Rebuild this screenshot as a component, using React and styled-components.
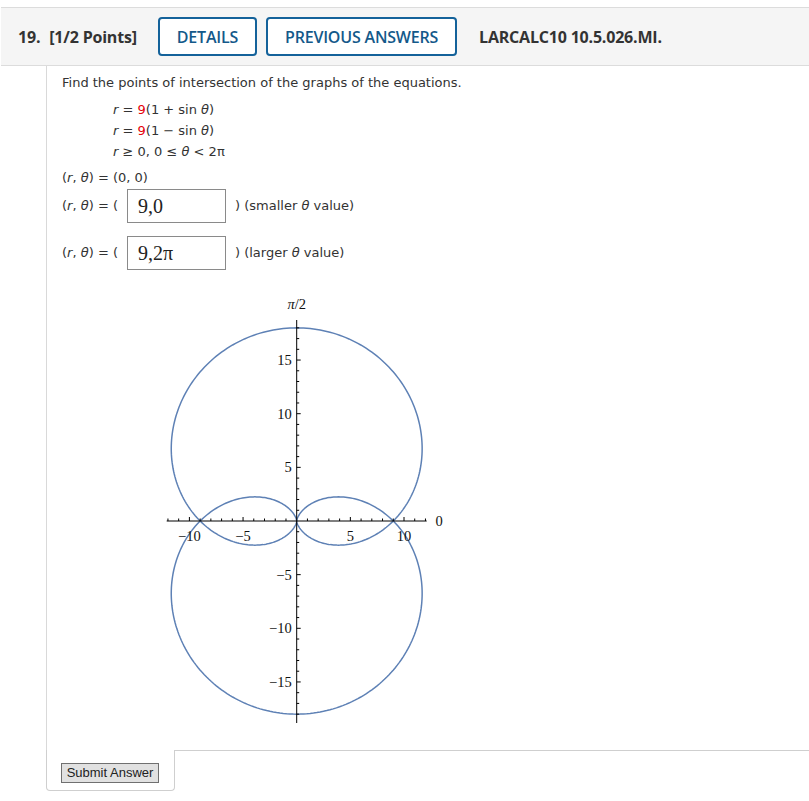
import React from "react";
import styled, { createGlobalStyle } from "styled-components";

const GlobalStyle = createGlobalStyle`
	body {
		margin: 0;
		background: #fff;
		font-family: "DejaVu Sans", Verdana, sans-serif;
		color: #333;
	}
`;

const Page = styled.div`
	padding-top: 7px;
	width: 809px;
`;

const Header = styled.div`
	display: flex;
	align-items: center;
	height: 57px;
	margin-left: 1px;
	background: #f5f5f5;
	border-top: 1px solid #dcdcdc;
	border-bottom: 1px solid #dcdcdc;
	font-family: "Open Sans", sans-serif;
	font-size: 16px;
	font-weight: 700;
	color: #333;
	letter-spacing: -0.2px;
`;

const Num = styled.span`
	margin-left: 17px;
	margin-right: 9px;
`;

const Points = styled.span`
	margin-right: 21px;
`;

const HeadButton = styled.button`
	height: 39px;
	margin-right: 9px;
	padding: 0 17px;
	background: #fff;
	border: 2px solid #14629a;
	border-radius: 4px;
	font-family: "Open Sans", sans-serif;
	font-size: 16px;
	font-weight: 600;
	letter-spacing: -0.2px;
	color: #14598a;
`;

const Code = styled.span`
	margin-left: 13px;
`;

const Body = styled.div`
	margin-left: 46px;
	border-left: 1px solid #d9d9d9;
	padding: 9px 0 20px 15px;
	font-size: 13px;
	line-height: 16px;
`;

const Line = styled.div`
	margin-top: ${(p) => p.$top || 0}px;
	padding-left: ${(p) => p.$indent || 0}px;
	display: flex;
	align-items: center;
	white-space: pre;
`;

const Red = styled.span`
	color: #e5000a;
`;

const I = styled.i`
	font-style: italic;
`;

const AnswerBox = styled.div`
	width: 87px;
	height: 32px;
	margin: 0 9px 0 9px;
	padding-left: 10px;
	border: 1px solid #8a8a8a;
	display: flex;
	align-items: center;
	font-family: "Liberation Serif", "Times New Roman", serif;
	font-size: 20px;
	color: #222;
`;

const Graph = styled.svg`
	display: block;
	margin: 20px 0 0 88px;
`;

const Footer = styled.div`
	display: flex;
	margin-left: 46px;
`;

const SubmitBox = styled.div`
	width: 98px;
	padding: 12px 15px 7px 14px;
	border: 1px solid #cfcfcf;
	border-top: none;
	border-radius: 0 0 4px 4px;
`;

const Filler = styled.div`
	flex: 1;
	border-top: 1px solid #cfcfcf;
`;

const SubmitButton = styled.button`
	width: 98px;
	height: 20px;
	padding: 0;
	background: #e1e1e1;
	border: 1px solid #707070;
	font-family: "Liberation Sans", Arial, sans-serif;
	font-size: 13px;
	color: #222;
`;

const OX = 146.7;
const OY = 231;
const S = 10.73;
const BLUE = "#5e81b5";

const cardioid = (sign) => {
	const pts = [];
	for (let i = 0; i <= 360; i++) {
		const t = (i / 360) * Math.PI * 2;
		const r = 9 * (1 + sign * Math.sin(t));
		const x = OX + S * r * Math.cos(t);
		const y = OY - S * r * Math.sin(t);
		pts.push(`${i ? "L" : "M"}${x.toFixed(2)},${y.toFixed(2)}`);
	}
	return pts.join(" ");
};

const PolarPlot = () => {
	const xt = [];
	for (let k = -12; k <= 12; k++) {
		if (k === 0) continue;
		const x = OX + k * S;
		const len = k % 5 === 0 ? 4 : 2.5;
		xt.push(<line key={"x" + k} x1={x} x2={x} y1={OY} y2={OY - len} stroke="#000" strokeWidth="1" />);
	}
	const yt = [];
	for (let k = -18; k <= 18; k++) {
		if (k === 0) continue;
		const y = OY - k * S;
		const len = k % 5 === 0 ? 4 : 2.5;
		yt.push(<line key={"y" + k} x1={OX} x2={OX + len} y1={y} y2={y} stroke="#000" strokeWidth="1" />);
	}
	const font = { fontFamily: "'Liberation Serif', 'DejaVu Serif', serif", fontSize: 14.5, fill: "#111" };
	return (
		<Graph width="300" height="440" viewBox="0 0 300 440">
			<path d={cardioid(1)} fill="none" stroke={BLUE} strokeWidth="1.5" />
			<path d={cardioid(-1)} fill="none" stroke={BLUE} strokeWidth="1.5" />
			<line x1="16.7" x2="276.7" y1={OY} y2={OY} stroke="#000" strokeWidth="1" />
			<line x1={OX} x2={OX} y1="30" y2="433" stroke="#000" strokeWidth="1" />
			{xt}
			{yt}
			{[15, 10, 5, -5, -10, -15].map((v) => (
				<text key={v} x={OX - 5} y={OY - v * S + 5} textAnchor="end" {...font}>
					{v < 0 ? "\u2212" + -v : v}
				</text>
			))}
			{[-10, -5, 5, 10].map((v) => (
				<text key={v} x={OX + v * S} y={OY + 20} textAnchor="middle" {...font}>
					{v < 0 ? "\u2212" + -v : v}
				</text>
			))}
			<text x="289" y={OY + 5} textAnchor="middle" {...font}>0</text>
			<text x={OX} y="19" textAnchor="middle" {...font}>
				<tspan fontStyle="italic">π</tspan>/2
			</text>
		</Graph>
	);
};

export default function App() {
	return (
		<Page>
			<GlobalStyle />
			<Header>
				<Num>19.</Num>
				<Points>[1/2 Points]</Points>
				<HeadButton>DETAILS</HeadButton>
				<HeadButton>PREVIOUS ANSWERS</HeadButton>
				<Code>LARCALC10 10.5.026.MI.</Code>
			</Header>
			<Body>
				<Line>Find the points of intersection of the graphs of the equations.</Line>
				<Line $top={11} $indent={51}>
					<I>r</I> = <Red>9</Red>(1 + sin <I>θ</I>)
				</Line>
				<Line $top={5} $indent={51}>
					<I>r</I> = <Red>9</Red>(1 − sin <I>θ</I>)
				</Line>
				<Line $top={5} $indent={51}>
					<I>r</I> ≥ 0, 0 ≤ <I>θ</I> &lt; 2π
				</Line>
				<Line $top={10}>
					(<I>r</I>, <I>θ</I>) = (0, 0)
				</Line>
				<Line $top={3}>
					(<I>r</I>, <I>θ</I>) = (
					<AnswerBox>9,0</AnswerBox>) (smaller <I>θ</I> value)
				</Line>
				<Line $top={13}>
					(<I>r</I>, <I>θ</I>) = (
					<AnswerBox>9,2π</AnswerBox>) (larger <I>θ</I> value)
				</Line>
				<PolarPlot />
			</Body>
			<Footer>
				<SubmitBox>
					<SubmitButton>Submit Answer</SubmitButton>
				</SubmitBox>
				<Filler />
			</Footer>
		</Page>
	);
}
